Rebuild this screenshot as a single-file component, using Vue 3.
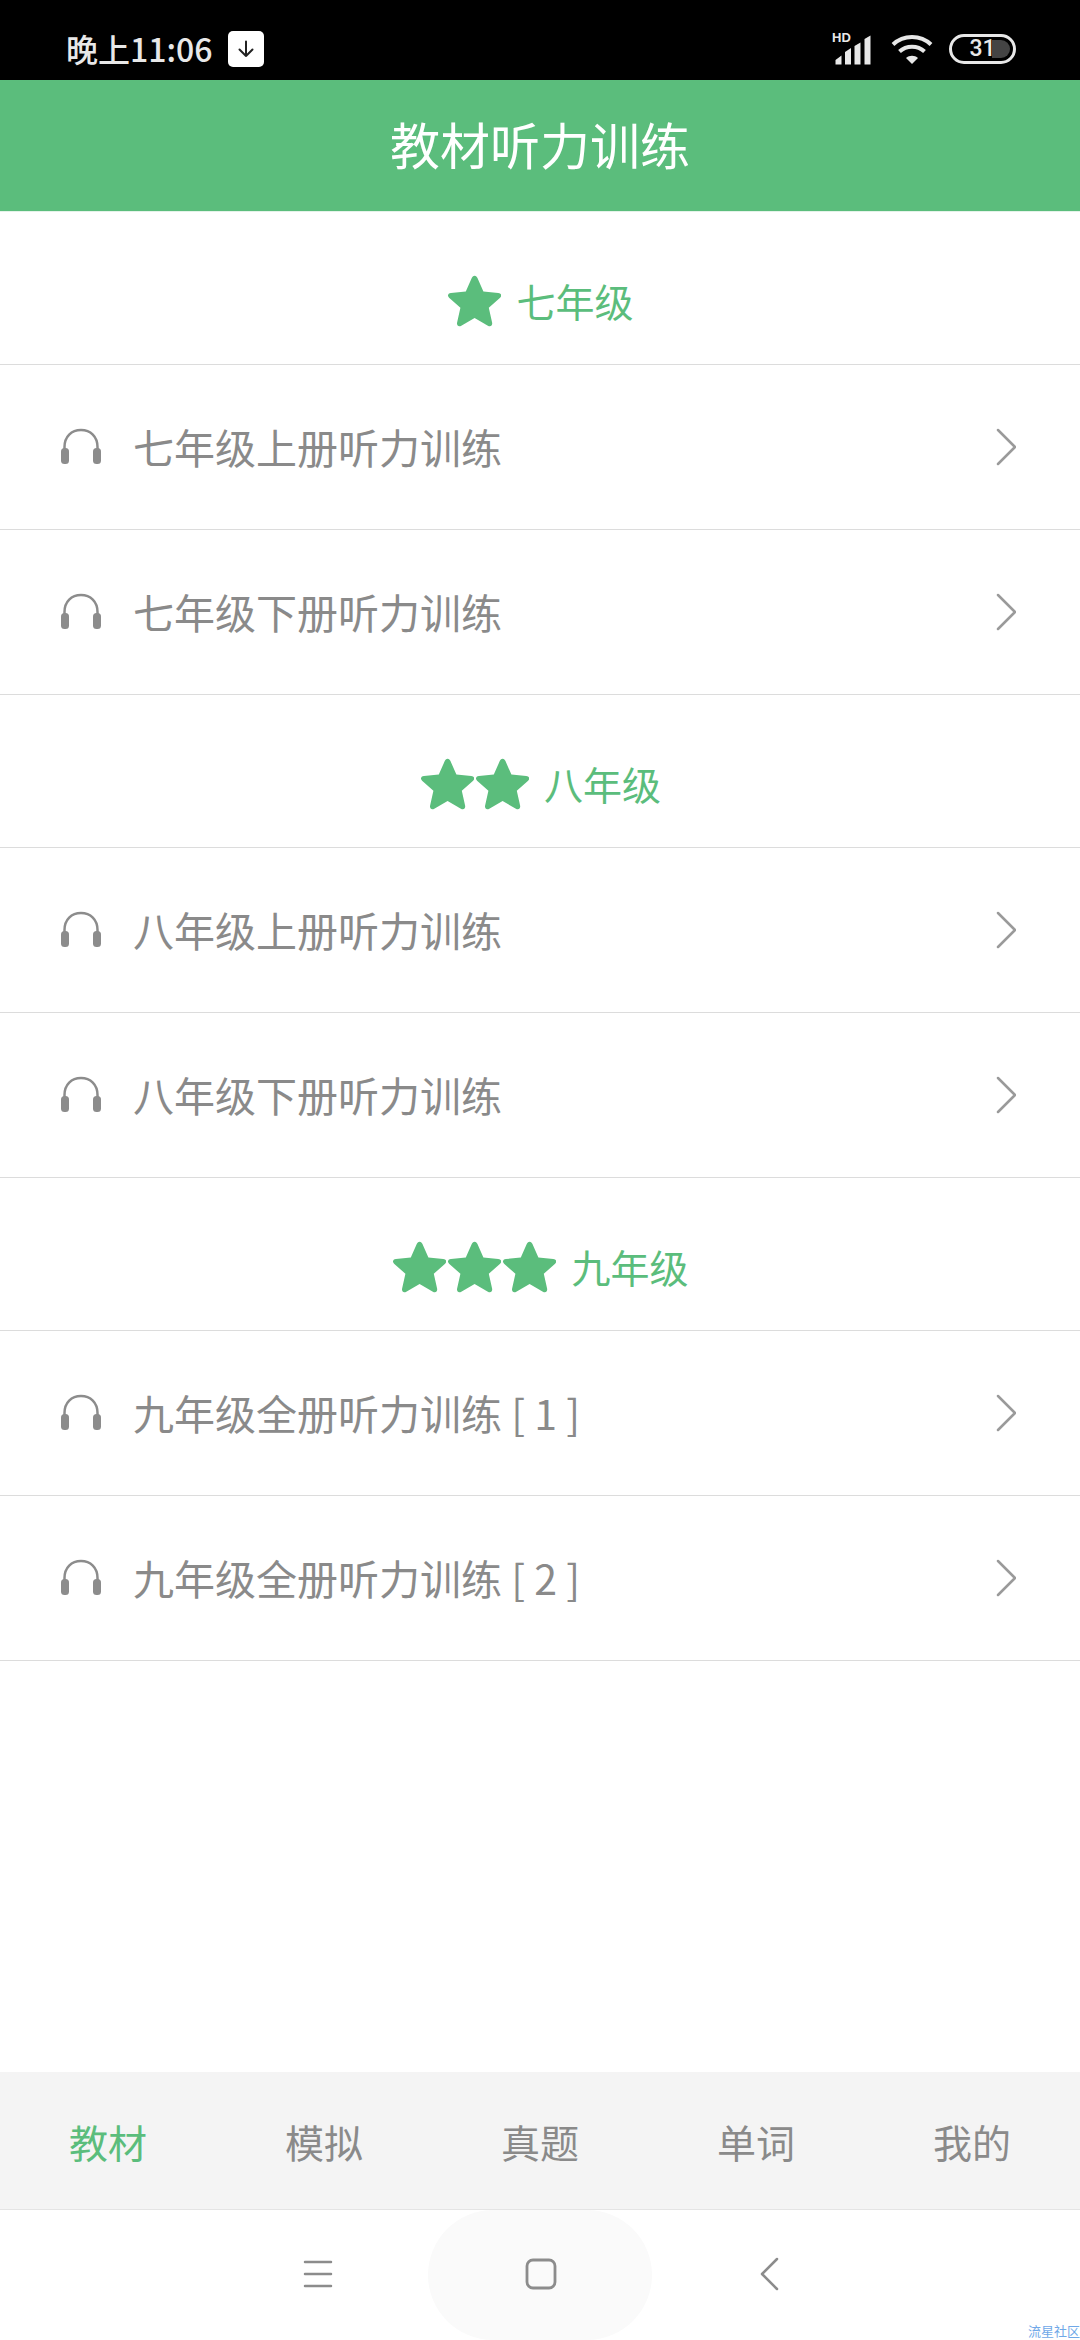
<template>
  <div class="phone">
    <div class="status-bar">
      <div class="status-left">
        <span class="clock">晚上11:06</span>
        <span class="download-badge">
          <svg width="22" height="22" viewBox="0 0 22 22" fill="none" stroke="#222" stroke-width="2" stroke-linecap="round" stroke-linejoin="round">
            <path d="M11 3.500V18M4.500 11.500L11 18l6.500-6.500" />
          </svg>
        </span>
      </div>
      <div class="status-right">
        <span class="signal">
          <span class="hd">HD</span>
          <svg width="42" height="30" viewBox="0 0 37 30" fill="#e8e8e8">
            <path d="M1 29.500V25l6-4.500v9zM10.500 29.500V17l6-4v16.500zM20 29.500V11l6-3.500v22zM30 29.500V4l6-3.500v29z" />
          </svg>
        </span>
        <svg class="wifi" width="42" height="32" viewBox="0 0 42 32" fill="none" stroke="#e8e8e8" stroke-width="4">
          <path d="M2 11.500C12.500 1.500 29.500 1.500 40 11.500" />
          <path d="M8.500 18.500c7-6.500 18-6.500 25 0" />
          <path d="M21 31l-6-6c3.300-3 8.700-3 12 0z" fill="#e8e8e8" stroke="none" />
        </svg>
        <span class="battery">
          <span class="battery-fill"></span>
          <span class="battery-num">31</span>
        </span>
      </div>
    </div>

    <div class="app-header">教材听力训练</div>

    <div class="content">
      <template v-for="group in groups" :key="group.name">
        <div class="section-title">
          <svg v-for="n in group.stars" :key="n" class="star" width="55" height="53" viewBox="1.500 1 50 48">
            <path d="M27.500 2.500c1.300 0 2.100 1 2.600 2.100l5.400 12.300 13.500 1.300c2.800.3 3.500 2.600 1.700 4.300L40.400 31.600l3 13.400c.6 2.700-1.400 4.300-3.800 2.900L27.500 41l-12.100 6.900c-2.400 1.400-4.400-.2-3.800-2.900l3-13.400L4.300 22.500c-1.800-1.700-1.100-4 1.700-4.300l13.500-1.300 5.400-12.300c.5-1.100 1.300-2.100 2.600-2.100z" fill="#5bbd7c" />
          </svg>
          <span class="section-name">{{ group.name }}</span>
        </div>
        <div v-for="item in group.items" :key="item" class="row">
          <svg class="headphone" width="44" height="38" viewBox="0 0 44 38" fill="none">
            <path d="M5.500 24V20C5.500 9.500 12.500 3 22 3s16.500 6.500 16.500 17v4" stroke="#8c8c8c" stroke-width="2.500" />
            <rect x="2" y="21" width="8" height="16" rx="3.500" fill="#8c8c8c" />
            <rect x="34" y="21" width="8" height="16" rx="3.500" fill="#8c8c8c" />
          </svg>
          <span class="row-text">{{ item }}</span>
          <svg class="chevron" width="20" height="38" viewBox="0 0 20 38" fill="none" stroke="#9a9a9a" stroke-width="2.500" stroke-linecap="round" stroke-linejoin="round">
            <path d="M2 2l17 17L2 36" />
          </svg>
        </div>
      </template>
    </div>

    <div class="tab-bar">
      <div v-for="(tab, i) in tabs" :key="tab" class="tab" :class="{ active: i === 0 }">{{ tab }}</div>
    </div>

    <div class="nav-bar">
      <div class="home-glow"></div>
      <svg class="nav-icon" width="32" height="28" viewBox="0 0 32 28" fill="none" stroke="#8c8c8c" stroke-width="2.500" stroke-linecap="round">
        <path d="M3 2h26M3 14h26M3 26h26" />
      </svg>
      <svg class="nav-icon home" width="32" height="32" viewBox="0 0 32 32" fill="none" stroke="#8c8c8c" stroke-width="2.800">
        <rect x="2" y="2" width="28" height="28" rx="6" />
      </svg>
      <svg class="nav-icon" width="32" height="34" viewBox="0 0 32 34" fill="none" stroke="#8c8c8c" stroke-width="2.500" stroke-linecap="round" stroke-linejoin="round">
        <path d="M23 2L8 17l15 15" />
      </svg>
      <span class="watermark">流星社区</span>
    </div>
  </div>
</template>

<script setup>
const groups = [
  { name: '七年级', stars: 1, items: ['七年级上册听力训练', '七年级下册听力训练'] },
  { name: '八年级', stars: 2, items: ['八年级上册听力训练', '八年级下册听力训练'] },
  { name: '九年级', stars: 3, items: ['九年级全册听力训练 [ 1 ]', '九年级全册听力训练 [ 2 ]'] }
];

const tabs = ['教材', '模拟', '真题', '单词', '我的'];
</script>

<style>
html, body {
  margin: 0;
  background: #fff;
}
</style>

<style scoped>
.phone {
  width: 1080px;
  height: 2340px;
  display: flex;
  flex-direction: column;
  background: #fff;
  overflow: hidden;
  font-family: "Noto Sans CJK SC", "Noto Sans", sans-serif;
}

.status-bar {
  height: 80px;
  flex: none;
  background: #000;
  color: #e8e8e8;
  display: flex;
  justify-content: space-between;
  align-items: center;
  padding: 18px 64px 0 66px;
  box-sizing: border-box;
}

.status-left {
  display: flex;
  align-items: center;
}

.clock {
  font-size: 32px;
  line-height: 40px;
  font-weight: 500;
  margin-bottom: 2px;
}

.download-badge {
  width: 36px;
  height: 36px;
  margin-left: 15px;
  background: #fff;
  border-radius: 5px;
  display: flex;
  align-items: center;
  justify-content: center;
}

.status-right {
  display: flex;
  align-items: center;
}

.signal {
  position: relative;
  width: 42px;
  height: 32px;
  display: flex;
  align-items: flex-end;
}

.hd {
  position: absolute;
  left: 0;
  top: -2px;
  font-family: "Liberation Sans", sans-serif;
  font-size: 13px;
  line-height: 13px;
  font-weight: 700;
  color: #e8e8e8;
}

.wifi {
  margin-left: 17px;
}

.battery {
  position: relative;
  width: 61px;
  height: 24px;
  margin-left: 16px;
  border: 3px solid #e8e8e8;
  border-radius: 15px;
  overflow: hidden;
  display: flex;
  align-items: center;
  justify-content: center;
}

.battery-fill {
  position: absolute;
  right: 3px;
  top: 3px;
  bottom: 3px;
  width: 18px;
  background: #444;
  border-radius: 0 9px 9px 0;
}

.battery-num {
  position: relative;
  font-size: 23px;
  line-height: 24px;
  font-weight: 500;
  font-family: "Roboto", sans-serif;
  color: #e8e8e8;
}

.app-header {
  height: 131px;
  flex: none;
  background: #5bbd7c;
  color: #fff;
  font-size: 50px;
  line-height: 127px;
  text-align: center;
  border-bottom: 1px solid #e4f3e9;
}

.content {
  flex: 1;
  min-height: 0;
}

.section-title {
  padding-top: 24px;
  height: 128px;
  border-bottom: 1px solid #dcdcdc;
  display: flex;
  align-items: center;
  justify-content: center;
}

.star {
  display: block;
}

.section-name {
  margin-left: 15px;
  font-size: 39px;
  line-height: 60px;
  color: #5bbd7c;
}

.row {
  height: 164px;
  border-bottom: 1px solid #dcdcdc;
  display: flex;
  align-items: center;
  padding: 0 64px 0 59px;
}

.headphone {
  flex: none;
  margin-bottom: 2px;
}

.row-text {
  flex: 1;
  margin-left: 30px;
  margin-bottom: 3px;
  font-size: 41px;
  line-height: 60px;
  color: #8a8a8a;
}

.tab-bar {
  height: 137px;
  flex: none;
  background: #f4f4f4;
  border-bottom: 1px solid #e4e4e4;
  display: flex;
}

.tab {
  flex: 1;
  text-align: center;
  font-size: 39px;
  line-height: 138px;
  color: #8a8a8a;
}

.tab.active {
  color: #5bbd7c;
}

.nav-bar {
  position: relative;
  height: 130px;
  flex: none;
  display: flex;
  align-items: center;
  padding: 0 0 2px 302px;
  box-sizing: border-box;
  background: #fff;
  overflow: hidden;
}

.home-glow {
  position: absolute;
  left: 428px;
  top: 0;
  width: 224px;
  height: 130px;
  background: #fafafa;
  border-radius: 100px;
}

.nav-icon {
  position: relative;
  flex: none;
}

.nav-icon.home {
  margin: 0 197px 0 191px;
}

.watermark {
  position: absolute;
  right: 0;
  bottom: 0;
  font-size: 13px;
  line-height: 19px;
  color: #6fa8e8;
}
</style>
